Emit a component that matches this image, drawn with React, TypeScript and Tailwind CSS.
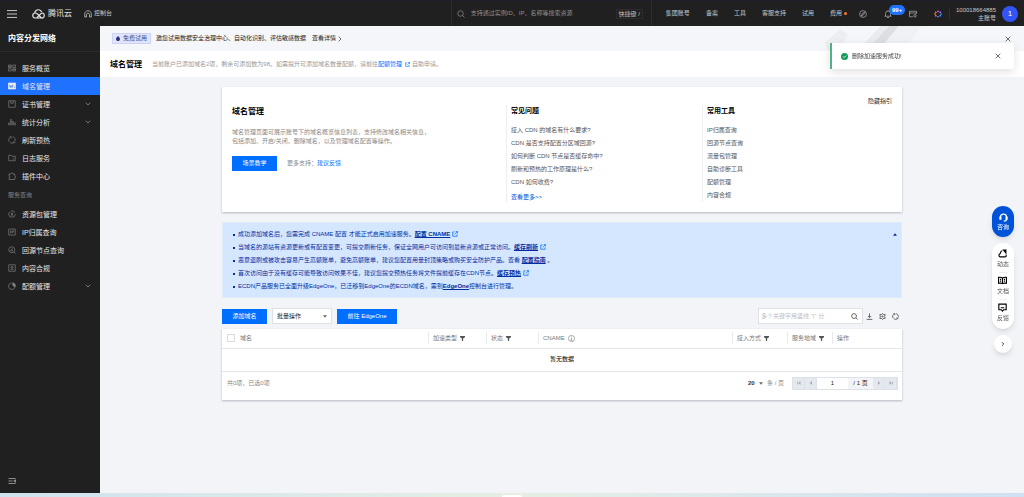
import { useState, type ReactNode } from 'react';
import { ChevronDown, ChevronRight, X } from 'lucide-react';

type IconName = keyof typeof icons;

const icons = {
  overview: (
    <>
      <path d="M1 2h5.5v5H1zM9.5 2H15v5H9.5zM1 9.5h5.5v4.500H1zM9.5 9.5H15v4.500H9.5z" />
      <path d="M1 4.5h5.5M9.5 11.5H15" />
    </>
  ),
  domain: (
    <>
      <path d="M0.5 2h15v12H.5z" fill="currentColor" />
      <path d="M3 6l1.5 5 1.8-4 1.8 4L9.500 6M12 10.500h1.500" stroke="#1f71ff" />
    </>
  ),
  cert: <path d="M1.500 1.500h13v13h-13zM5.500 1.500v5h5v-5" />,
  stats: <path d="M2 9v5.500M6 2v12.500M10 6v8.500M14 9v5.500" strokeWidth="2" />,
  refresh: <path d="M9.500 1.500A6.500 6.500 0 0 1 14 10.500M11.500 13.500A6.500 6.500 0 0 1 4 13M2.500 11.500A6.500 6.500 0 0 1 5.500 2M3.500 1.500h3v3M14.500 13h-3v-3" />,
  log: <path d="M1.500 13.500v-11h5l2 2h6v9zM9 10h3" />,
  plugin: <path d="M2 4h4c-.5-3 4.500-3 4 0h3.500v4c2.500 0 2.500 3.500 0 3.500V15H2v-3.500c2.500 0 2.500-3.500 0-3.500z" />,
  pack: (
    <>
      <path d="M5.500 2h5L14 5M15 8l-3 6H4L1 8l2-4" />
      <path d="M5.500 5L8 8l2.500-3M8 8v4M6 9.500h4" />
    </>
  ),
  ip: (
    <>
      <path d="M1.500 2h13v12h-13z" />
      <path d="M5 5.500v5M8 10.500v-5h2.500c1.500 0 1.500 2.500 0 2.500H8" />
    </>
  ),
  node: (
    <>
      <circle cx="7.500" cy="7.500" r="6" />
      <path d="M12 12l3 3M5 9l5-4M5 9.500h5" />
    </>
  ),
  check: (
    <>
      <path d="M1.500 1.500h13v13h-13z" />
      <circle cx="8" cy="6.500" r="2" />
      <path d="M4 12.500c1-3 7-3 8 0" />
    </>
  ),
  quota: (
    <>
      <path d="M7 2a6.500 6.500 0 1 0 7 7" />
      <path d="M9.500 1.500a6 6 0 0 1 5 8L9.500 7z" fill="currentColor" />
    </>
  ),
  collapse: <path d="M1 3h14M1 8h8M1 13h14M15 5.500L11.500 8l3.500 2.500z" />,
  menu: <path d="M0 2.500h16M0 8h16M0 13.500h16" />,
  home: <path d="M1.500 14V7.500C1.500 4 4.500 1.500 8 1.500s6.500 2.500 6.500 6V14h-3.500V9c0-3.500-6-3.500-6 0v5z" />,
  search: (
    <>
      <circle cx="7" cy="7" r="5.500" />
      <path d="M11 11l4 4" />
    </>
  ),
  compass: (
    <>
      <circle cx="8" cy="8" r="6.800" />
      <path d="M11.500 4.500L9 9.500l-4.500 2L7 6.500z" />
    </>
  ),
  bell: <path d="M1 12.500h14M3 12.500V7a5 5 0 0 1 10 0v5.500M6 15h4M8 .5V2" />,
  wallet: (
    <>
      <path d="M8 13.500H1v-11h14v5M1 6h14" />
      <circle cx="12" cy="11.500" r="2.500" />
    </>
  ),
  external: <path d="M7 2.500H2v11.500h11.500V9M10 1.500h5v5M15 1.500L7.500 9" />,
  download: <path d="M8 1v9M4.500 7L8 10.500 11.500 7M1.500 14.500h13" />,
  gear: (
    <>
      <path d="M8 1l2 2.500h4L13 8l1 4.500h-4L8 15l-2-2.500H2L3 8 2 3.500h4z" />
      <circle cx="8" cy="8" r="1.500" />
    </>
  ),
  info: (
    <>
      <circle cx="8" cy="8" r="7" />
      <path d="M8 3.500v1.500M6.500 7H8v5M6 12h4" />
    </>
  ),
  headset: <path d="M2.500 10V7.500a5.500 5.500 0 0 1 11 0V10M1.500 7v4h2V7zM12.500 7v4h2V7zM13.500 11c0 2-1.500 3.500-5 3.500" />,
  activity: (
    <>
      <path d="M8 3C4 3 5 7 3.500 8.500 1 9.500 1 14 4 14h8.500c3 0 2.500-3 1-4" />
      <path d="M10 2h4v5z" fill="currentColor" />
    </>
  ),
  docs: <path d="M8 3.500v10M8 3.500C6 2 3 2 1 2.500V13c2-.5 5-.5 7 .5 2-1 5-1 7-.5V2.500c-2-.5-5-.5-7 1M3.500 6H5.500M3.500 9H5.500M10.500 6h2M10.500 9h2" />,
  feedback: <path d="M1.500 2h13v10H10l-2 2.500L6 12H1.500zM5 8.500h6" />,
};

function Icon({ name, className = 'size-2', width = 1.5 }: { name: IconName; className?: string; width?: number }) {
  return (
    <svg viewBox="0 0 16 16" fill="none" stroke="currentColor" strokeWidth={width} className={`shrink-0 ${className}`} aria-hidden="true">
      {icons[name]}
    </svg>
  );
}

type MenuItem = { icon: IconName; label: string; more?: boolean };

const mainMenu: MenuItem[] = [
  { icon: 'overview', label: '服务概览' },
  { icon: 'domain', label: '域名管理' },
  { icon: 'cert', label: '证书管理', more: true },
  { icon: 'stats', label: '统计分析', more: true },
  { icon: 'refresh', label: '刷新预热' },
  { icon: 'log', label: '日志服务' },
  { icon: 'plugin', label: '插件中心' },
];

const queryMenu: MenuItem[] = [
  { icon: 'pack', label: '资源包管理' },
  { icon: 'ip', label: 'IP归属查询' },
  { icon: 'node', label: '回源节点查询' },
  { icon: 'check', label: '内容合规' },
  { icon: 'quota', label: '配额管理', more: true },
];

const questions = [
  '接入 CDN 的域名有什么要求?',
  'CDN 是否支持配置分区域回源?',
  '如何判断 CDN 节点是否缓存命中?',
  '刷新和预热的工作原理是什么?',
  'CDN 如何收费?',
];

const tools = ['IP归属查询', '回源节点查询', '流量包管理', '自助诊断工具', '配额管理', '内容合规'];

function Header() {
  return (
    <header className="flex h-[26px] shrink-0 items-center border-t border-[#221f2c] bg-[#202020] text-[#c8c8c8]">
      <button aria-label="菜单" className="ml-[7px] text-[#d0d0d0]">
        <Icon name="menu" className="size-2.5" />
      </button>
      <a href="#" className="ml-[15px] flex items-center gap-[3px] text-[8px] text-[#e0e0e0]">
        <svg viewBox="0 0 26 20" fill="none" stroke="currentColor" strokeWidth="2.400" className="h-2.5 w-[13px]" aria-hidden="true">
          <path d="M6.500 18C3.500 18 1.500 15.700 1.500 13s2-5 5-5c1.800 0 3.200.7 4.500 2l8 8H6.500" />
          <path d="M5.500 8C5.500 4.500 8.700 1.500 12.500 1.500c3.200 0 5.800 1.800 6.700 4.800" />
          <path d="M9.500 18l7.500-8c1-1.200 2.200-2 3.800-2 2.200.2 3.700 2.300 3.700 5 0 2.800-2 5-5 5" />
        </svg>
        腾讯云
      </a>
      <a href="#" className="ml-3 flex items-center gap-0.5">
        <Icon name="home" />
        控制台
      </a>
      <div className="ml-auto flex h-full w-[201px] items-center border-x border-[#2d2d2d] pr-2 pl-[5px]">
        <Icon name="search" className="size-2 text-[#888888]" />
        <input
          aria-label="搜索"
          placeholder="支持通过实例ID、IP、名称等搜索资源"
          className="ml-1.5 min-w-0 flex-1 outline-none placeholder:text-[#909090]"
        />
        <kbd className="border border-[#2d2d2d] px-0.5 text-[6px] leading-[8px] [font-family:inherit]">快捷键 /</kbd>
      </div>
      <nav className="flex items-center gap-4 pl-3.5">
        <a href="#">集团账号</a>
        <a href="#">备案</a>
        <a href="#">工具</a>
        <a href="#">客服支持</a>
        <a href="#">试用</a>
        <a href="#" className="flex items-center gap-0.5">
          费用
          <span className="size-[3px] rounded-full bg-[#ff7a1a]" />
        </a>
      </nav>
      <div className="ml-3 flex items-center gap-[17px]">
        <button aria-label="发现"><Icon name="compass" width={1.2} /></button>
        <button aria-label="消息" className="relative">
          <Icon name="bell" width={1.2} />
          <span className="absolute -top-[5px] left-[5px] rounded-full bg-[#1f71ff] px-[3px] text-[6px] leading-[10px] font-bold text-white">99+</span>
        </button>
        <button aria-label="卡包"><Icon name="wallet" width={1.2} /></button>
        <button aria-label="应用">
          <svg viewBox="0 0 16 16" fill="none" strokeWidth="2" className="size-2" aria-hidden="true">
            <path d="M3 6V3.500L5.500 5 8 1.500" stroke="#ff5a4f" />
            <path d="M8 1.500L10.500 4.500 13 3.500V6" stroke="#a36bff" />
            <path d="M13 6l2 2-2 2v2.500" stroke="#3aa0ff" />
            <path d="M13 12.500l-2.500-1L8 14.500" stroke="#2f7bff" />
            <path d="M8 14.500L5.500 11.500 3 12.500V10" stroke="#ff4fa0" />
            <path d="M3 10L1 8l2-2" stroke="#ffa32e" />
          </svg>
        </button>
      </div>
      <div className="ml-[7px] h-2.5 border-l border-[#333333]" />
      <div className="ml-1.5 text-right leading-[8px]">
        <p>100018664885</p>
        <p>主账号</p>
      </div>
      <button aria-label="账号" className="mr-1.5 ml-1.5 size-4 shrink-0 rounded-full bg-[#3355f5] text-[8px] text-white">1</button>
    </header>
  );
}

function MenuLink({ item, active }: { item: MenuItem; active: boolean }) {
  return (
    <li>
      <a
        href="#"
        aria-current={active ? 'page' : undefined}
        className={`flex h-[18px] items-center px-2 text-[7px] text-[#e8e8e8] ${active ? 'bg-[#1f71ff]' : ''}`}
      >
        <Icon name={item.icon} width={1.3} className={active ? 'size-2' : 'size-2 text-[#858585]'} />
        <span className="ml-1.5 flex-1">{item.label}</span>
        {item.more && <ChevronDown className="size-2 text-[#a0a0a0]" />}
      </a>
    </li>
  );
}

function Sidebar() {
  return (
    <aside className="flex w-[100px] shrink-0 flex-col bg-[#202020]">
      <h1 className="border-b border-[#2d2d2d] pl-2 text-[8px] leading-[25px] font-bold text-white">内容分发网络</h1>
      <ul className="mt-[7px]">
        {mainMenu.map(item => <MenuLink key={item.label} item={item} active={item.label === '域名管理'} />)}
      </ul>
      <p className="pl-2 leading-[20px] text-[#858585]">服务查询</p>
      <ul>
        {queryMenu.map(item => <MenuLink key={item.label} item={item} active={false} />)}
      </ul>
      <button aria-label="收起" className="mt-auto mb-2 ml-2 self-start text-[#b0b0b0]">
        <Icon name="collapse" />
      </button>
    </aside>
  );
}

function Banner() {
  return (
    <div className="relative flex h-[25px] items-center overflow-hidden bg-[#f5f6f9] pr-3 pl-3 text-[#222222]">
      <svg viewBox="0 0 140 25" className="absolute top-0 right-[60px] h-[25px] w-[140px]" aria-hidden="true">
        <path d="M0 17L17 3l7 6-10 16H6z" fill="#eceef1" />
        <path d="M33 25L57 0h8L42 25z" fill="#e9ebee" />
        <path d="M42 25L65 0h10L54 25z" fill="#dcdee2" />
        <path d="M54 25L75 0h22L80 25z" fill="#eff1f4" />
      </svg>
      <span className="flex h-[11px] items-center gap-[3px] border border-[#ccd3f7] bg-[#e0e4fc] px-[3px] text-[#3d4a85]">
        <svg viewBox="0 0 8 10" className="h-[5px] w-1 fill-[#27357e]" aria-hidden="true">
          <path d="M4 0c2 2 4 4 4 6.200a4 4 0 0 1-8 0C0 4 2 2 4 0z" />
        </svg>
        免费试用
      </span>
      <p className="ml-[5px]">邀您试用数据安全治理中心、自动化识别、评估敏感数据</p>
      <a href="#" className="ml-1.5 flex items-center">
        查看详情
        <ChevronRight className="size-2" />
      </a>
      <button aria-label="关闭" className="ml-auto">
        <X className="size-2" />
      </button>
    </div>
  );
}

function Guide() {
  return (
    <section className="bg-white px-2.5 py-2.5 shadow-[0_1px_2px_rgba(30,40,60,0.3)]">
      <div className="flex justify-end leading-[8px]">
        <button className="text-[#222222]">隐藏指引</button>
      </div>
      <div className="grid grid-cols-[274fr_196fr_190fr]">
        <div>
          <h2 className="mt-px text-[8px] leading-[12px] font-bold text-black">域名管理</h2>
          <p className="mt-2.5 leading-[9px] text-[#888888]">
            域名管理页面可展示账号下的域名概览信息列表，支持修改域名相关信息，
            <br />
            包括添加、开启/关闭、删除域名，以及管理域名配置等操作。
          </p>
          <div className="mt-2.5 flex items-center">
            <button className="h-[15px] w-[45px] bg-[#006eff] text-white">场景教学</button>
            <span className="ml-2.5 text-[#888888]">更多支持：</span>
            <a href="#" className="text-[#006eff]">建议反馈</a>
          </div>
        </div>
        <div className="border-l border-[#eceef2] pl-1">
          <h3 className="text-[7px] leading-[11px] font-bold text-black">常见问题</h3>
          <ul className="mt-2 leading-[13px] text-[#555555]">
            {questions.map(q => <li key={q}><a href="#">{q}</a></li>)}
          </ul>
          <a href="#" className="mt-[3px] block leading-[10px] text-[#0052d9]">查看更多&gt;&gt;</a>
        </div>
        <div className="border-l border-[#eceef2] pl-1">
          <h3 className="text-[7px] leading-[11px] font-bold text-black">常用工具</h3>
          <ul className="mt-2 leading-[13px] text-[#555555]">
            {tools.map(tool => <li key={tool}><a href="#">{tool}</a></li>)}
          </ul>
        </div>
      </div>
    </section>
  );
}

function NoteLink({ children, external }: { children: ReactNode; external?: boolean }) {
  return (
    <>
      <a href="#" className="font-bold underline">{children}</a>
      {external && <Icon name="external" width={2} className="ml-0.5 inline size-1.5 align-middle text-[#006eff]" />}
    </>
  );
}

function Notes() {
  return (
    <section className="mt-2.5 flex items-start justify-between border border-[#dfebfb] bg-[#d5e7ff] pt-[5px] pr-1 pb-1 pl-2.5 leading-[13px] text-[#002da0]">
      <ul className="list-none [&>li]:flex [&>li]:items-center [&>li]:before:mr-[3px] [&>li]:before:size-0.5 [&>li]:before:bg-[#002da0]">
        <li><span>成功添加域名后，您需完成 CNAME 配置 才能正式启用加速服务。<NoteLink external>配置 CNAME</NoteLink></span></li>
        <li><span>当域名的源站有资源更新或有配置变更，可提交刷新任务，保证全网用户可访问到最新资源或正常访问。<NoteLink external>缓存刷新</NoteLink></span></li>
        <li><span>恶意盗刷或被攻击容易产生高额账单，避免高额账单，建议您配置用量封顶策略或购买安全防护产品。查看 <NoteLink>配置指南</NoteLink> 。</span></li>
        <li><span>首次访问由于没有缓存可能导致访问效果不佳，建议您提交预热任务将文件提前缓存在CDN节点。<NoteLink external>缓存预热</NoteLink></span></li>
        <li><span>ECDN产品服务已全面升级EdgeOne，已迁移到EdgeOne的ECDN域名，需到<NoteLink>EdgeOne</NoteLink>控制台进行管理。</span></li>
      </ul>
      <button aria-label="收起提示" className="flex h-3 items-center">
        <svg viewBox="0 0 8 5" className="h-[3px] w-1 fill-current" aria-hidden="true"><path d="M4 0l4 5H0z" /></svg>
      </button>
    </section>
  );
}

function Caret() {
  return (
    <svg viewBox="0 0 8 5" className="pointer-events-none h-[3px] w-1 fill-[#666666]" aria-hidden="true">
      <path d="M0 0h8L4 5z" />
    </svg>
  );
}

function Toolbar() {
  const [keyword, setKeyword] = useState('');

  return (
    <div className="mt-2.5 flex h-4 items-center">
      <button className="h-[15px] w-[45px] bg-[#006eff] text-white">添加域名</button>
      <div className="ml-[5px] flex h-4 w-[60px] items-center border border-[#dde1e8] bg-white pr-1 text-[#222222]">
        <select aria-label="批量操作" className="min-w-0 flex-1 appearance-none pl-1 outline-none">
          <option>批量操作</option>
        </select>
        <Caret />
      </div>
      <button className="ml-[5px] h-[15px] w-[60px] bg-[#006eff] text-white">前往 EdgeOne</button>
      <div className="ml-auto flex h-4 w-[105px] items-center border border-[#dde1e8] bg-white pr-1 pl-0.5">
        <input
          aria-label="搜索域名"
          value={keyword}
          onChange={e => setKeyword(e.target.value)}
          placeholder="多个关键字用竖线 &quot;|&quot; 分"
          className="min-w-0 flex-1 outline-none placeholder:text-[#bbbbbb]"
        />
        <button aria-label="搜索" className="text-[#555555]"><Icon name="search" width={2} className="size-[7px]" /></button>
      </div>
      <div className="ml-[3px] flex gap-1.5 pr-[3px] text-[#555555]">
        <button aria-label="下载"><Icon name="download" width={2} className="size-[7px]" /></button>
        <button aria-label="设置"><Icon name="gear" width={2} className="size-[7px]" /></button>
        <button aria-label="刷新"><Icon name="refresh" width={2} className="size-[7px]" /></button>
      </div>
    </div>
  );
}

function Th({ children, filter, className }: { children: ReactNode; filter?: boolean; className: string }) {
  return (
    <th className={`h-[19px] p-0 font-normal ${className}`}>
      <div className="flex h-3 items-center gap-[3px] border-l border-[#e7eaef] pl-1">
        {children}
        {filter && (
          <svg viewBox="0 0 8 8" className="size-[5px] fill-[#555555]" aria-hidden="true"><path d="M0 0h8v2L5 4v4H3V4L0 2z" /></svg>
        )}
      </div>
    </th>
  );
}

function DomainTable() {
  return (
    <section className="mt-[5px] bg-white shadow-[0_1px_2px_rgba(30,40,60,0.3)]">
      <table className="w-full table-fixed border-collapse text-left text-[#777777]">
        <thead>
          <tr className="border-b border-[#e3e7ee]">
            <th className="h-[19px] w-[206px] p-0 font-normal">
              <label className="flex items-center gap-[5px] pl-[5px]">
                <input type="checkbox" aria-label="全选" className="size-2 appearance-none border border-[#d8dce3] bg-white" />
                域名
              </label>
            </th>
            <Th filter className="w-[58px]">加速类型</Th>
            <Th filter className="w-[52px]">状态</Th>
            <Th className="">CNAME<Icon name="info" width={1.4} className="size-[7px]" /></Th>
            <Th filter className="w-[55px]">接入方式</Th>
            <Th filter className="w-[45px]">服务地域</Th>
            <Th className="w-[70px]">操作</Th>
          </tr>
        </thead>
        <tbody>
          <tr className="border-b border-[#e3e7ee]">
            <td colSpan={7} className="h-[23px] p-0 text-center text-black">暂无数据</td>
          </tr>
        </tbody>
      </table>
      <div className="flex h-[28px] items-start justify-between pt-[5px] pr-1 pl-[5px] leading-[13px] text-[#888888]">
        <p>共0项，已选0项</p>
        <div className="flex h-[13px] items-center">
          <select aria-label="每页条数" className="appearance-none pr-1 font-bold text-[#333333] outline-none">
            <option>20</option>
          </select>
          <Caret />
          <span className="ml-1">条 / 页</span>
          <div className="ml-2 flex h-[13px] border border-[#dde1e8] bg-[#e5e8ee] text-[#a5abb6]">
            <PageButton label="首页" path="M0 1h1.500v6H0zM7 0v8L2.500 4z" />
            <PageButton label="上一页" path="M6 0v8L1.500 4z" />
            <input aria-label="页码" defaultValue="1" className="w-[31px] bg-white text-center text-[#222222] outline-none" />
            <span className="flex w-[25px] items-center justify-center bg-[#f2f4f8] text-[#222222]">/ 1 页</span>
            <PageButton label="下一页" path="M2 0v8l4.500-4z" />
            <PageButton label="末页" path="M6.500 1H8v6H6.500zM1 0v8l4.500-4z" />
          </div>
        </div>
      </div>
    </section>
  );
}

function PageButton({ label, path }: { label: string; path: string }) {
  return (
    <button aria-label={label} disabled className="flex w-3 items-center justify-center border-r border-[#dde1e8]">
      <svg viewBox="0 0 8 8" className="size-1 fill-current" aria-hidden="true"><path d={path} /></svg>
    </button>
  );
}

function Toast() {
  return (
    <div role="status" className="fixed top-[43px] right-2.5 flex h-[26px] w-[184px] items-center border-l-2 border-[#4fb286] bg-white pr-3 pl-[9px] text-[#444444] shadow-[0_3px_10px_rgba(0,0,0,0.12)]">
      <svg viewBox="0 0 16 16" className="size-[7px]" aria-hidden="true">
        <circle cx="8" cy="8" r="8" fill="#0f9d58" />
        <path d="M4.500 8l2.500 2.500 4.500-4.500" fill="none" stroke="#fff" strokeWidth="2" />
      </svg>
      <span className="ml-1">删除加速服务成功!</span>
      <button aria-label="关闭通知" className="ml-auto text-[#222222]"><X className="size-2" /></button>
    </div>
  );
}

function FloatBar() {
  return (
    <div className="fixed top-[206px] right-2.5 flex w-[22px] flex-col items-center gap-1.5 text-[#555555]">
      <button className="flex h-[31px] w-full flex-col items-center justify-center gap-px rounded-full bg-[#0052d9] leading-[8px] text-white shadow-md">
        <Icon name="headset" width={2} className="size-[9px]" />
        咨询
      </button>
      <div className="flex h-[86px] w-full flex-col items-center justify-center gap-[3px] rounded-full bg-white leading-[10px] shadow-md [&_svg]:text-black">
        <button className="flex flex-col items-center gap-px"><Icon name="activity" width={2} className="size-[9px]" />动态</button>
        <hr className="w-2 border-[#eceef2]" />
        <button className="flex flex-col items-center gap-px"><Icon name="docs" width={2} className="size-[9px]" />文档</button>
        <hr className="w-2 border-[#eceef2]" />
        <button className="flex flex-col items-center gap-px"><Icon name="feedback" width={2} className="size-[9px]" />反馈</button>
      </div>
      <button aria-label="收起工具栏" className="flex size-[18px] items-center justify-center rounded-full bg-white text-black shadow-md">
        <ChevronRight className="size-1.5" strokeWidth={3} />
      </button>
    </div>
  );
}

export default function App() {
  return (
    <div className="flex min-h-screen flex-col bg-[#f3f4f8] text-[6px] leading-[9px] [font-family:'Liberation_Sans','Noto_Sans_CJK_SC',sans-serif]">
      <Header />
      <div className="flex flex-1">
        <Sidebar />
        <main className="min-w-0 flex-1">
          <Banner />
          <div className="flex h-[26px] items-center bg-white pl-2.5">
            <h2 className="text-[8px] font-bold text-black">域名管理</h2>
            <p className="ml-2.5 flex items-center text-[#999999]">
              当前账户已添加域名2项，剩余可添加数为98。如需提升可添加域名数量配额，请前往
              <a href="#" className="flex items-center gap-[3px] text-[#006eff]">
                配额管理
                <Icon name="external" width={2} className="mr-0.5 size-[5px]" />
              </a>
              自助申请。
            </p>
          </div>
          <div className="mx-auto w-full max-w-[680px] pt-2.5 pb-4">
            <Guide />
            <Notes />
            <Toolbar />
            <DomainTable />
          </div>
        </main>
      </div>
      <footer className="flex h-1 shrink-0 justify-center bg-linear-to-r from-[#cfe3ee] via-[#e6eee4] to-[#cfe0f2]">
        <div className="mt-0.5 w-5 rounded-t-sm bg-white" />
      </footer>
      <Toast />
      <FloatBar />
    </div>
  );
}
